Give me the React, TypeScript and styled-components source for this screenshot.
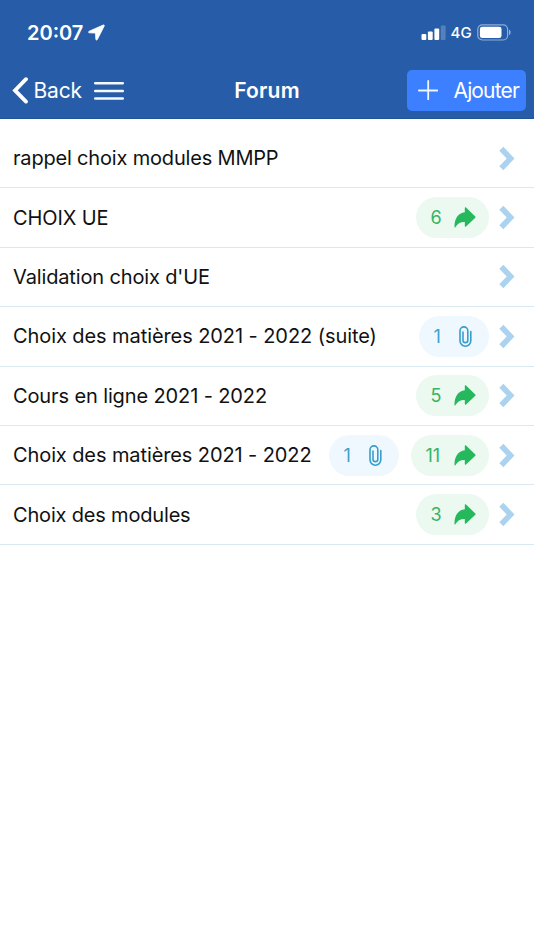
import React from "react";
import styled, { createGlobalStyle } from "styled-components";

const GlobalStyle = createGlobalStyle`
  *, *::before, *::after { box-sizing: border-box; }
  html, body { margin: 0; padding: 0; background: #fff; }
  body { font-family: Inter, "Liberation Sans", sans-serif; color: #111; overflow: hidden; }
  svg { display: block; flex: none; }
`;

const Screen = styled.div`
  display: flex;
  flex-direction: column;
  width: 100%;
  height: 950px;
  background: #fff;
`;

const Header = styled.header`
  height: 119px;
  background: #275da8;
  border-bottom: 1px solid #22549c;
  color: #fff;
`;

const StatusBar = styled.div`
  display: flex;
  justify-content: space-between;
  align-items: center;
  height: 62px;
  padding: 3px 22px 0 27px;
`;

const StatusGroup = styled.div`
  display: flex;
  align-items: center;
`;

const Clock = styled.span`
  width: 61px;
  font-size: 20px;
  font-weight: 600;
  white-space: nowrap;
`;

const Network = styled.span`
  width: 26.5px;
  margin-left: 5px;
  font-size: 15px;
  font-weight: 500;
  letter-spacing: 0.1px;
`;

const NavBar = styled.nav`
  display: grid;
  grid-template-columns: 1fr auto 1fr;
  align-items: center;
  height: 57px;
  padding: 0 8px 0 12px;
`;

const NavStart = styled.div`
  display: flex;
  align-items: center;
  padding-top: 1px;
`;

const PlainButton = styled.button`
  display: flex;
  align-items: center;
  padding: 0;
  border: 0;
  background: none;
  color: inherit;
  font: inherit;
`;

const BackLabel = styled.span`
  width: 60.5px;
  margin-left: 4.5px;
  padding-bottom: 2px;
  text-align: left;
  font-size: 21px;
  letter-spacing: -0.2px;
`;

const Title = styled.h1`
  margin: 0 4px 0 0;
  font-size: 21px;
  font-weight: 600;
  letter-spacing: 0.2px;
`;

const AddButton = styled(PlainButton)`
  justify-self: end;
  width: 119px;
  height: 41px;
  padding: 0 0 1px 11px;
  gap: 15.5px;
  border-radius: 5px;
  background: #3c7fff;
  font-size: 21px;
  letter-spacing: -0.85px;
`;

const List = styled.ul`
  list-style: none;
  margin: 0;
  padding: 10px 0 0;
`;

const Row = styled.li`
  display: flex;
  align-items: center;
  height: 59.4px;
  padding: 0 19px 0 13px;
  border-bottom: 1.5px solid #dae8f2;
`;

const Topic = styled.span<{ $tracking: number }>`
  flex: 1;
  font-size: 20px;
  letter-spacing: ${(p) => p.$tracking}px;
  white-space: nowrap;
`;

const Badge = styled.span<{ $kind: "file" | "reply" }>`
  display: flex;
  align-items: center;
  justify-content: space-between;
  height: 41px;
  margin-left: 12px;
  padding: ${(p) => (p.$kind === "file" ? "0 17px 0 15px" : "0 12.5px 0 15px")};
  width: ${(p) => (p.$kind === "file" ? "70px" : "73px")};
  border-radius: 21px;
  background: ${(p) => (p.$kind === "file" ? "#eff8fe" : "#ebf9f1")};
  color: ${(p) => (p.$kind === "file" ? "#3da2cc" : "#35b467")};
  font-size: 18px;
`;

const WideBadge = styled(Badge)`
  width: 78px;
`;

const ChevronBox = styled.span`
  margin-left: 10.5px;
`;

const LocationArrow = () => (
  <svg width="17" height="17" viewBox="0 0 17 17">
    <path d="M15.300 1 1.200 7.200c-1 .5-.8 1.500.3 1.600l6 .3.3 6c.1 1.200 1.100 1.300 1.600.3L16.200 2c.3-.7-.2-1.300-.9-1Z" fill="#fff" stroke="#fff" strokeWidth=".8" />
  </svg>
);

const Signal = () => (
  <svg width="25" height="16" viewBox="0 0 25 16" fill="#fff">
    <rect x="0.500" y="9" width="4.8" height="6" rx="1" />
    <rect x="6.9" y="6.5" width="4.8" height="8.5" rx="1" />
    <rect x="13.4" y="3.6" width="4.8" height="11.4" rx="1" />
    <rect x="19.8" y="0.5" width="4.8" height="14.5" rx="1" opacity=".22" />
  </svg>
);

const Battery = () => (
  <svg width="35" height="17" viewBox="0 0 35 17">
    <rect x=".8" y=".8" width="29.8" height="15.2" rx="4.5" fill="none" stroke="#8fadd5" strokeWidth="1.2" />
    <rect x="2.9" y="2.8" width="21.6" height="11.2" rx="2.3" fill="#fff" />
    <path d="M32 5.7c2.2.5 2.2 4.8 0 5.4Z" fill="#8fadd5" />
  </svg>
);

const BackChevron = () => (
  <svg width="17" height="28" viewBox="0 0 17 28">
    <path d="M14 2.200 3 13.400l11 11.200" fill="none" stroke="#fff" strokeWidth="3.8" strokeLinecap="round" strokeLinejoin="miter" />
  </svg>
);

const Menu = () => (
  <svg width="30" height="20" viewBox="0 0 30 20">
    <path d="M1.200 2.300h27.600M1.200 10h27.600M1.200 17.600h27.600" stroke="#f5f9ff" strokeWidth="2.500" strokeLinecap="round" />
  </svg>
);

const Plus = () => (
  <svg width="20" height="20" viewBox="0 0 20 20">
    <path d="M.9 10.500h18.400M10.200.9v18.400" stroke="#f0f6ff" strokeWidth="1.800" strokeLinecap="round" />
  </svg>
);

const ReplyArrow = () => (
  <svg width="22" height="21" viewBox="0 0 22 21">
    <path d="M10.800 1c0-.8.6-1 1.200-.5l9.300 8.900c.4.4.4.9 0 1.300L12 19.500c-.6.5-1.200.3-1.200-.5v-4C6.200 14.900 3.400 16.800 1.400 20.200c-.3.500-.9.300-.9-.3C.3 12 4.100 5.800 10.800 5.300Z" fill="#26b85d" />
  </svg>
);

const Paperclip = () => (
  <svg width="13" height="21" viewBox="0 0 13 21">
    <path d="M11.800 5.500v9.300a5.400 5.400 0 0 1-10.800 0V4.800a3.900 3.900 0 0 1 7.800 0v9.400a2.400 2.400 0 0 1-4.800 0V6" fill="none" stroke="#369fcc" strokeWidth="1.600" strokeLinecap="round" />
  </svg>
);

const RowChevron = () => (
  <svg width="16" height="25" viewBox="0 0 16 25">
    <path d="M4.400.8 15.500 12.500 4.400 24.200.3 20.200 7.700 12.500.3 4.800Z" fill="#abd3ef" />
  </svg>
);

type TopicData = { title: string; tracking: number; files?: number; replies?: number };

const topics: TopicData[] = [
  { title: "rappel choix modules MMPP", tracking: -0.18 },
  { title: "CHOIX UE", tracking: -0.1, replies: 6 },
  { title: "Validation choix d'UE", tracking: -0.14 },
  { title: "Choix des matières 2021 - 2022 (suite)", tracking: -0.08, files: 1 },
  { title: "Cours en ligne 2021 - 2022", tracking: -0.12, replies: 5 },
  { title: "Choix des matières 2021 - 2022", tracking: -0.1, files: 1, replies: 11 },
  { title: "Choix des modules", tracking: -0.18, replies: 3 },
];

function TopicRow({ topic }: { topic: TopicData }) {
  const ReplyBadge = (topic.replies ?? 0) > 9 ? WideBadge : Badge;
  return (
    <Row>
      <Topic $tracking={topic.tracking}>{topic.title}</Topic>
      {topic.files && (
        <Badge $kind="file">
          {topic.files}
          <Paperclip />
        </Badge>
      )}
      {topic.replies && (
        <ReplyBadge $kind="reply">
          {topic.replies}
          <ReplyArrow />
        </ReplyBadge>
      )}
      <ChevronBox>
        <RowChevron />
      </ChevronBox>
    </Row>
  );
}

export default function App() {
  return (
    <Screen>
      <GlobalStyle />
      <Header>
        <StatusBar>
          <StatusGroup>
            <Clock>20:07</Clock>
            <LocationArrow />
          </StatusGroup>
          <StatusGroup>
            <Signal />
            <Network>4G</Network>
            <Battery />
          </StatusGroup>
        </StatusBar>
        <NavBar>
          <NavStart>
            <PlainButton>
              <BackChevron />
              <BackLabel>Back</BackLabel>
            </PlainButton>
            <PlainButton aria-label="Menu">
              <Menu />
            </PlainButton>
          </NavStart>
          <Title>Forum</Title>
          <AddButton>
            <Plus />
            Ajouter
          </AddButton>
        </NavBar>
      </Header>
      <List>
        {topics.map((topic) => (
          <TopicRow key={topic.title} topic={topic} />
        ))}
      </List>
    </Screen>
  );
}
